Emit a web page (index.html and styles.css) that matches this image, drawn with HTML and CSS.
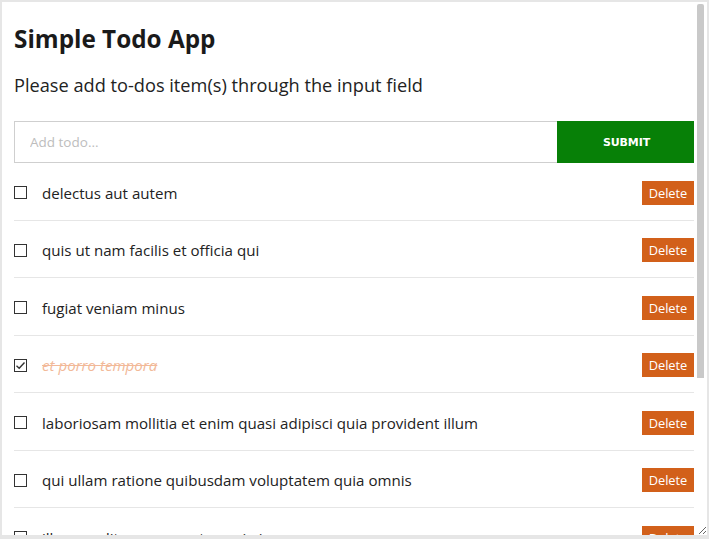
FILE: index.html
```html
<!DOCTYPE html>
<html lang="en">
<head>
<meta charset="utf-8">
<title>Simple Todo App</title>
<link rel="stylesheet" href="styles.css">
</head>
<body>
<div class="frame">
  <div class="app">
    <h1 class="title">Simple Todo App</h1>
    <p class="lead">Please add to-dos item(s) through the input field</p>
    <form class="add-form">
      <input class="add-input" type="text" placeholder="Add todo...">
      <button class="submit" type="button">SUBMIT</button>
    </form>
    <ul class="list">
      <li class="item"><span class="check"></span><span class="text">delectus aut autem</span><button class="del" type="button">Delete</button></li>
      <li class="item"><span class="check"></span><span class="text">quis ut nam facilis et officia qui</span><button class="del" type="button">Delete</button></li>
      <li class="item"><span class="check"></span><span class="text">fugiat veniam minus</span><button class="del" type="button">Delete</button></li>
      <li class="item done"><span class="check"><svg viewBox="0 0 13 13" width="13" height="13"><path d="M2.5 6.8 L5.2 9.3 L10.5 3.6" fill="none" stroke="#333" stroke-width="1.4"/></svg></span><span class="text">et porro tempora</span><button class="del" type="button">Delete</button></li>
      <li class="item"><span class="check"></span><span class="text">laboriosam mollitia et enim quasi adipisci quia provident illum</span><button class="del" type="button">Delete</button></li>
      <li class="item"><span class="check"></span><span class="text">qui ullam ratione quibusdam voluptatem quia omnis</span><button class="del" type="button">Delete</button></li>
      <li class="item"><span class="check"></span><span class="text">illo expedita consequatur quia in</span><button class="del" type="button">Delete</button></li>
      <li class="item"><span class="check"></span><span class="text">quo adipisci enim quam ut ab</span><button class="del" type="button">Delete</button></li>
      <li class="item"><span class="check"></span><span class="text">molestiae perspiciatis ipsa</span><button class="del" type="button">Delete</button></li>
      <li class="item"><span class="check"></span><span class="text">illo est ratione doloremque quia maiores aut</span><button class="del" type="button">Delete</button></li>
    </ul>
  </div>
  <div class="scroll-thumb"></div>
</div>
</body>
</html>
```

FILE: styles.css
```css
html, body {
  margin: 0;
  padding: 0;
  background: #fff;
}

.frame {
  position: relative;
  box-sizing: border-box;
  width: 709px;
  height: 539px;
  border: 2px solid #e6e6e6;
  border-bottom-width: 4px;
  overflow: hidden;
  resize: both;
  font-family: "Open Sans", "Noto Sans", sans-serif;
  color: #222;
}

.scroll-thumb {
  position: absolute;
  left: 695px;
  top: 2px;
  width: 7px;
  height: 374px;
  background: #c9c9c9;
  border-radius: 2px 2px 0 0;
}

.app {
  padding: 21px 13px 20px 12px;
}

.title {
  margin: 0;
  font-size: 24.3px;
  line-height: 31px;
  font-weight: 700;
  color: #1a1a1a;
}

.lead {
  margin: 18px 0 0;
  font-size: 18.2px;
  line-height: 27px;
  color: #222;
}

.add-form {
  display: flex;
  margin-top: 22px;
  height: 42px;
}

.add-input {
  flex: 1;
  min-width: 0;
  box-sizing: border-box;
  height: 42px;
  margin: 0;
  border: 1px solid #cfcfcf;
  border-right: none;
  padding: 0 15px;
  font-family: inherit;
  font-size: 13.5px;
  color: #222;
  outline: none;
}

.add-input::placeholder {
  color: #bdbdbd;
}

.submit {
  width: 137px;
  height: 42px;
  margin: 0;
  padding: 0 0 0 2px;
  border: none;
  background: #078007;
  color: #fff;
  font-family: "DejaVu Sans", sans-serif;
  font-weight: 700;
  font-size: 11px;
  letter-spacing: -0.1px;
}

.list {
  list-style: none;
  margin: 0;
  padding: 0;
}

.item {
  display: flex;
  align-items: center;
  padding: 17.5px 0 15px;
  border-bottom: 1px solid #e6e6e6;
}

.check {
  box-sizing: border-box;
  width: 13px;
  height: 13px;
  border: 1px solid #333;
  flex: none;
  display: flex;
}

.check svg {
  margin: -1px;
}

.text {
  flex: 1;
  margin-left: 15px;
  font-size: 15.1px;
  line-height: 24px;
  color: #222;
}

.done .text {
  color: #f2b998;
  font-style: italic;
  text-decoration: line-through;
}

.del {
  flex: none;
  width: 52px;
  height: 24px;
  margin: 0;
  padding: 0;
  border: none;
  background: #d2601a;
  color: #fff;
  font-family: inherit;
  font-size: 12.8px;
}
```
